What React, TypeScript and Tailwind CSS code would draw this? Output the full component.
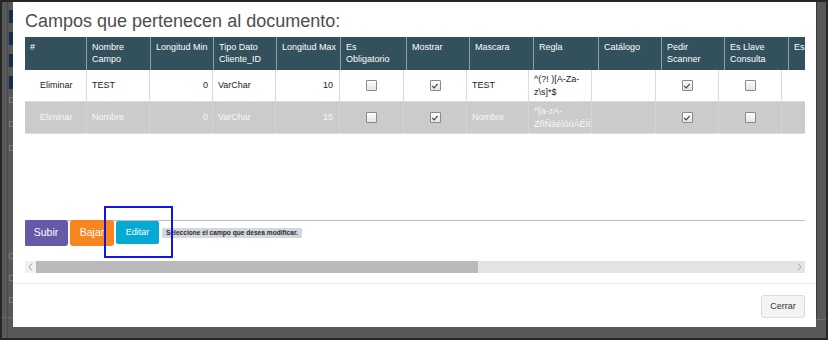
import React from "react";

const F = { fontFamily: '"Liberation Sans", Arial, sans-serif' };

const headerCols: { w: number; t: string[] }[] = [
  { w: 62, t: ["#"] },
  { w: 64, t: ["Nombre", "Campo"] },
  { w: 63, t: ["Longitud Min"] },
  { w: 63, t: ["Tipo Dato", "Cliente_ID"] },
  { w: 64, t: ["Longitud Max"] },
  { w: 66, t: ["Es", "Obligatorio"] },
  { w: 63, t: ["Mostrar"] },
  { w: 64, t: ["Mascara"] },
  { w: 65, t: ["Regla"] },
  { w: 63, t: ["Catálogo"] },
  { w: 63, t: ["Pedir", "Scanner"] },
  { w: 64, t: ["Es Llave", "Consulta"] },
  { w: 63, t: ["Es Campo"] },
];

const bodyW = [62, 63, 63, 63, 64, 64, 63, 62, 63, 64, 63, 63, 63];

function Check({ checked }: { checked: boolean }) {
  return (
    <span className="inline-flex w-[11px] h-[11px] border border-[#8a8a8a] bg-gradient-to-b from-[#fdfdfd] to-[#e6e6e6] items-center justify-center rounded-[1px]">
      {checked && (
        <svg width="8" height="8" viewBox="0 0 8 8">
          <path d="M1.3 4 L3.2 5.9 L6.7 1.8" fill="none" stroke="#4a4a4a" strokeWidth="1.2" />
        </svg>
      )}
    </span>
  );
}

type Cell = { c: React.ReactNode; a?: "l" | "r" | "c"; pl?: boolean };

function Row({ cells, alt }: { cells: Cell[]; alt?: boolean }) {
  return (
    <div
      className={`flex h-[32px] border-b ${alt ? "bg-[#cbcbcb] text-[#f7f7f7] border-[#dedede]" : "bg-white text-[#222] border-[#dcdcdc]"}`}
    >
      {cells.map((cell, i) => (
        <div
          key={i}
          style={{ width: bodyW[i] }}
          className={`shrink-0 h-full flex items-center overflow-hidden border-r ${alt ? "border-[#d4d4d4]" : "border-[#dcdcdc]"} ${
            cell.pl ? "pl-[15px]" : cell.a === "r" ? "justify-end pr-[4px]" : cell.a === "c" ? "justify-center" : "pl-[5px]"
          }`}
        >
          {cell.c}
        </div>
      ))}
    </div>
  );
}

export default function App() {
  const row1: Cell[] = [
    { c: "Eliminar", pl: true },
    { c: "TEST" },
    { c: "0", a: "r" },
    { c: "VarChar" },
    { c: <span className="pr-[2px]">10</span>, a: "r" },
    { c: <Check checked={false} />, a: "c" },
    { c: <Check checked />, a: "c" },
    { c: "TEST" },
    { c: <span className="leading-[13px] whitespace-nowrap">^(?! )[A-Za-<br />z\s]*$</span> },
    { c: "" },
    { c: <Check checked />, a: "c" },
    { c: <Check checked={false} />, a: "c" },
    { c: "" },
  ];
  const row2: Cell[] = [
    { c: "Eliminar", pl: true },
    { c: "Nombre" },
    { c: "0", a: "r" },
    { c: "VarChar" },
    { c: <span className="pr-[2px]">15</span>, a: "r" },
    { c: <Check checked={false} />, a: "c" },
    { c: <Check checked />, a: "c" },
    { c: "Nombre" },
    { c: <span className="leading-[13px] whitespace-nowrap">^[a-zA-<br />ZñÑáéíóúÁÉÍÓÚ</span> },
    { c: "" },
    { c: <Check checked />, a: "c" },
    { c: <Check checked={false} />, a: "c" },
    { c: "" },
  ];

  return (
    <div style={F} className="relative w-[828px] h-[340px] bg-[#585858] border-[2px] border-[#262626] flex overflow-hidden">
      {/* left strip (page behind overlay) */}
      <div className="w-[11px] shrink-0 flex flex-col relative">
        <div className="absolute left-[5px] top-0 bottom-0 w-px bg-[#4a4a4a]" />
        <div className="flex flex-col pl-[6px] pt-[8px] gap-[9px]">
          <div className="w-[5px] h-[13px] bg-[#1b2e47] border-l border-[#3a5677]" />
          <div className="w-[5px] h-[13px] bg-[#1b2e47] border-l border-[#3a5677]" />
          <div className="w-[5px] h-[13px] bg-[#1b2e47] border-l border-[#3a5677]" />
          <div className="w-[5px] h-[13px] bg-[#1b2e47] border-l border-[#3a5677]" />
        </div>
        <div className="flex flex-col pl-[7px] pt-[8px] gap-[18px]">
          <div className="w-[4px] h-[6px] border border-r-0 border-[#7a7a7a]" />
          <div className="w-[4px] h-[6px] border border-r-0 border-[#7a7a7a]" />
          <div className="w-[4px] h-[6px] border border-r-0 border-[#7a7a7a]" />
        </div>
        <div className="flex flex-col pl-[7px] pt-[102px] gap-[16px]">
          <div className="w-[4px] h-[6px] border border-r-0 border-[#7a7a7a]" />
          <div className="w-[4px] h-[6px] border border-r-0 border-[#7a7a7a]" />
          <div className="w-[4px] h-[6px] border border-r-0 border-[#7a7a7a]" />
        </div>
        <div className="mt-[14px] h-px bg-[#6c6c6c]" />
      </div>

      {/* modal */}
      <div className="w-[803px] shrink-0 h-[325px] bg-white flex flex-col">
        <div className="px-[12px] pr-[11px]">
          <div className="pt-[7px] h-[35px] text-[18px] leading-[24px] text-[#4d4d4d]">Campos que pertenecen al documento:</div>

          {/* table */}
          <div className="w-[780px] overflow-hidden text-[9px]">
            <div className="flex h-[33px] bg-[#33505d] text-white">
              {headerCols.map((h, i) => (
                <div
                  key={i}
                  style={{ width: h.w }}
                  className="shrink-0 h-full border-r border-[#8aa0aa] pl-[5px] pt-[4px] leading-[12px] whitespace-nowrap overflow-hidden"
                >
                  {h.t.map((l, j) => (
                    <div key={j}>{l}</div>
                  ))}
                </div>
              ))}
            </div>
            <Row cells={row1} />
            <Row cells={row2} alt />
            <div className="h-[86px]" />
            <div className="border-t border-[#bdbdbd] flex items-start gap-[2px] h-[41px] -ml-px">
              <button className="-mt-px w-[44px] h-[26px] bg-[#6659a8] text-white text-[10.5px] rounded-[3px]">Subir</button>
              <button className="-mt-px w-[44px] h-[26px] bg-[#f8861e] text-white text-[10.5px] rounded-[3px]">Bajar</button>
              <button className="mt-0 w-[43px] h-[23px] bg-[#04aad3] text-white text-[9px] rounded-[2px]">Editar</button>
              <span className="mt-[7px] ml-[1px] h-[10px] bg-[#d3d7de] text-[#2d2d2d] text-[6.6px] font-bold leading-[10px] px-[4px] rounded-[1px] whitespace-nowrap">
                Seleccione el campo que desea modificar.
              </span>
            </div>
            {/* scrollbar */}
            <div className="flex h-[12px] bg-[#e4e4e4] items-center">
              <div className="w-[11px] h-full bg-[#f1f1f1] flex items-center justify-center">
                <svg width="5" height="8" viewBox="0 0 5 8"><path d="M4 0.5 L1 4 L4 7.5" fill="none" stroke="#9a9a9a" strokeWidth="1" /></svg>
              </div>
              <div className="w-[442px] h-full bg-[#bababa]" />
              <div className="flex-1" />
              <div className="w-[11px] h-full flex items-center justify-center">
                <svg width="5" height="8" viewBox="0 0 5 8"><path d="M1 0.5 L4 4 L1 7.5" fill="none" stroke="#a8a8a8" strokeWidth="1" /></svg>
              </div>
            </div>
          </div>
        </div>
        <div className="mt-[10px] border-t border-[#ececec] flex-1 flex justify-end items-start pr-[11px] pt-[11px]">
          <button className="w-[44px] h-[23px] bg-[#f4f4f4] border border-[#dadada] rounded-[3px] text-[9px] text-[#333]">Cerrar</button>
        </div>
      </div>

      {/* right strip */}
      <div className="flex-1 flex flex-col">
        <div className="flex-1 border-l border-[#3c3c3c]" />
        <div className="h-px bg-[#6c6c6c] mb-[18px]" />
      </div>

      {/* annotation rectangle */}
      <div className="absolute left-[102px] top-[204px] w-[69px] h-[52px] border-2 border-[#1414e6]" />
    </div>
  );
}
